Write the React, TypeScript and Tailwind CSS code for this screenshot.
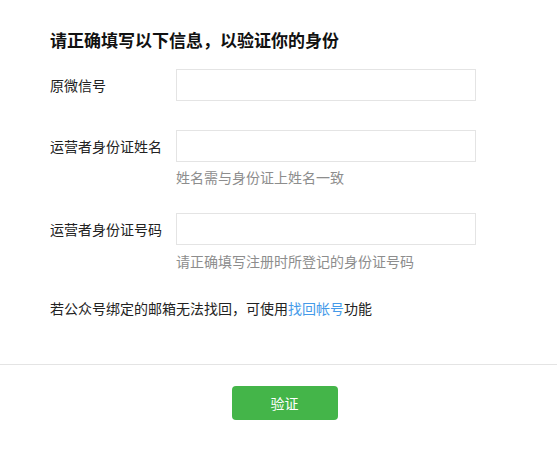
export default function App() {
  return (
    <div
      className="w-[557px] h-[462px] bg-white text-[#222] text-sm"
      style={{ fontFamily: '"Noto Sans CJK SC", "Noto Sans", sans-serif' }}
    >
      <div className="pl-[50px] pt-[30px]">
        <h2 className="text-[17px] leading-[20px] font-bold text-[#111]">请正确填写以下信息，以验证你的身份</h2>

        {/* 原微信号 */}
        <div className="flex items-center mt-[19px]">
          <label className="w-[126px] leading-5">原微信号</label>
          <input className="w-[300px] h-[32px] border border-[#e4e4e4] outline-none px-2" />
        </div>

        {/* 姓名 */}
        <div className="flex items-center mt-[29px]">
          <label className="w-[126px] leading-5">运营者身份证姓名</label>
          <input className="w-[300px] h-[32px] border border-[#e4e4e4] outline-none px-2" />
        </div>
        <p className="ml-[126px] mt-[5px] leading-5 text-[#8d8d8d]">姓名需与身份证上姓名一致</p>

        {/* 号码 */}
        <div className="flex items-center mt-[26px]">
          <label className="w-[126px] leading-5">运营者身份证号码</label>
          <input className="w-[300px] h-[32px] border border-[#e4e4e4] outline-none px-2" />
        </div>
        <p className="ml-[126px] mt-[6px] leading-5 text-[#8d8d8d]">请正确填写注册时所登记的身份证号码</p>

        <p className="mt-[27px] leading-5">
          若公众号绑定的邮箱无法找回，可使用<a href="#" className="text-[#459ae9]">找回帐号</a>功能
        </p>
      </div>

      <div className="mt-[46px] border-t border-[#e4e4e4] flex justify-center pt-[21px] pl-3">
        <button className="w-[106px] h-[34px] rounded bg-[#44b549] text-white text-sm">验证</button>
      </div>
    </div>
  )
}
